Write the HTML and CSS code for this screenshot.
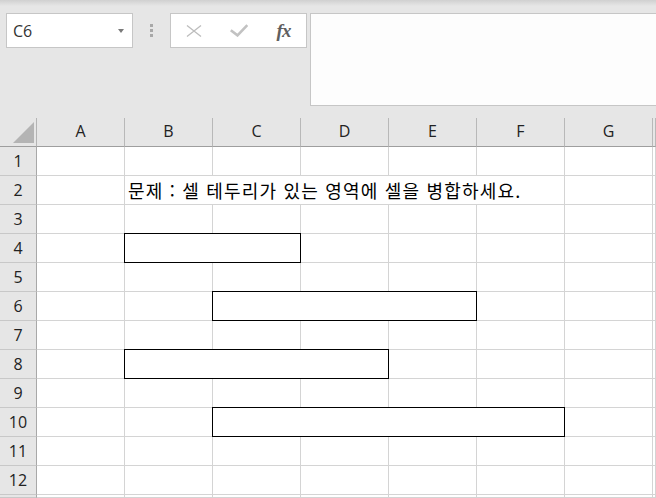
FILE: index.html
```html
<!DOCTYPE html>
<html lang="ko">
<head>
<meta charset="utf-8">
<title>Sheet</title>
<link rel="stylesheet" href="styles.css">
</head>
<body>
<div class="toolbar">
  <div class="namebox"><span class="ref">C6</span><span class="caret"></span></div>
  <div class="grip"><span></span><span></span><span></span></div>
  <div class="fxbox">
    <span class="slot"><svg width="16" height="12" viewBox="0 0 16 12"><path d="M1 0.5L15 11.5M15 0.5L1 11.5" stroke="#bdbdbd" stroke-width="1.3" fill="none"/></svg></span>
    <span class="slot"><svg width="18" height="13" viewBox="0 0 18 13"><path d="M0.8 6.2L7.5 11.4L17.3 1.2" stroke="#c2c2c2" stroke-width="2.6" fill="none"/></svg></span>
    <span class="slot fx">fx</span>
  </div>
  <div class="formula"></div>
</div>
<div class="sheet">
  <div class="corner"><svg width="21" height="21" viewBox="0 0 21 21"><path d="M21 0V21H0Z" fill="#b4b4b4"/></svg></div>
  <div class="ch">A</div><div class="ch">B</div><div class="ch">C</div><div class="ch">D</div><div class="ch">E</div><div class="ch">F</div><div class="ch">G</div><div class="ch"></div>

  <div class="rh">1</div><div class="c"></div><div class="c"></div><div class="c"></div><div class="c"></div><div class="c"></div><div class="c"></div><div class="c"></div><div class="c"></div>

  <div class="rh">2</div><div class="c"></div><div class="c text">문제 : 셀 테두리가 있는 영역에 셀을 병합하세요.</div><div class="c"></div><div class="c"></div>

  <div class="rh">3</div><div class="c"></div><div class="c"></div><div class="c"></div><div class="c"></div><div class="c"></div><div class="c"></div><div class="c"></div><div class="c"></div>

  <div class="rh">4</div><div class="c"></div><div class="box span2"></div><div class="c"></div><div class="c"></div><div class="c"></div><div class="c"></div><div class="c"></div>

  <div class="rh">5</div><div class="c"></div><div class="c"></div><div class="c"></div><div class="c"></div><div class="c"></div><div class="c"></div><div class="c"></div><div class="c"></div>

  <div class="rh">6</div><div class="c"></div><div class="c"></div><div class="box span3"></div><div class="c"></div><div class="c"></div><div class="c"></div>

  <div class="rh">7</div><div class="c"></div><div class="c"></div><div class="c"></div><div class="c"></div><div class="c"></div><div class="c"></div><div class="c"></div><div class="c"></div>

  <div class="rh">8</div><div class="c"></div><div class="box span3"></div><div class="c"></div><div class="c"></div><div class="c"></div><div class="c"></div>

  <div class="rh">9</div><div class="c"></div><div class="c"></div><div class="c"></div><div class="c"></div><div class="c"></div><div class="c"></div><div class="c"></div><div class="c"></div>

  <div class="rh">10</div><div class="c"></div><div class="c"></div><div class="box span4"></div><div class="c"></div><div class="c"></div>

  <div class="rh">11</div><div class="c"></div><div class="c"></div><div class="c"></div><div class="c"></div><div class="c"></div><div class="c"></div><div class="c"></div><div class="c"></div>

  <div class="rh">12</div><div class="c"></div><div class="c"></div><div class="c"></div><div class="c"></div><div class="c"></div><div class="c"></div><div class="c"></div><div class="c"></div>

  <div class="rh"></div><div class="c"></div><div class="c"></div><div class="c"></div><div class="c"></div><div class="c"></div><div class="c"></div><div class="c"></div><div class="c"></div>
</div>
</body>
</html>
```

FILE: styles.css
```css
* { box-sizing: border-box; }
html, body { margin: 0; padding: 0; }
body {
  width: 656px;
  height: 498px;
  overflow: hidden;
  background: #e6e6e6;
  font-family: "Open Sans", "Noto Sans", sans-serif;
}

.toolbar {
  height: 118px;
  display: flex;
  align-items: flex-start;
  padding: 13px 0 0 6px;
  background: linear-gradient(#d0d0d0 0, #e6e6e6 6px);
  overflow: hidden;
}
.namebox {
  flex: 0 0 127px;
  height: 35px;
  border: 1px solid #c6c6c6;
  background: #fff;
  display: flex;
  align-items: center;
  justify-content: space-between;
  padding: 0 8px 0 6px;
  font-size: 16px;
  color: #333;
}
.caret {
  width: 0;
  height: 0;
  border-left: 3.5px solid transparent;
  border-right: 3.5px solid transparent;
  border-top: 4px solid #7a7a7a;
}
.grip {
  flex: 0 0 3px;
  margin: 11px 0 0 17px;
  display: flex;
  flex-direction: column;
  gap: 2px;
}
.grip span {
  width: 3px;
  height: 3px;
  background: #a8a8a8;
}
.fxbox {
  flex: 0 0 137px;
  margin-left: 17px;
  height: 35px;
  border: 1px solid #c6c6c6;
  background: #fff;
  display: flex;
  align-items: center;
}
.slot {
  width: 45px;
  display: flex;
  justify-content: center;
  align-items: center;
}
.fx {
  font-family: "Liberation Serif", "DejaVu Serif", serif;
  font-style: italic;
  font-weight: bold;
  font-size: 19px;
  color: #5f5f5f;
  letter-spacing: -1px;
}
.formula {
  flex: 0 0 346px;
  margin-left: 3px;
  height: 93px;
  border: 1px solid #c6c6c6;
  border-right: none;
  background: #fdfdfd;
}

.sheet {
  display: grid;
  grid-template-columns: 37px repeat(7, 88px) 3px;
  grid-template-rows: repeat(13, 29px) 3px;
  background: #fff;
}
.corner {
  background: #e6e6e6;
  border-right: 1px solid #b4b4b4;
  border-bottom: 1px solid #9e9e9e;
  display: flex;
  justify-content: flex-end;
  align-items: flex-end;
  padding: 0 2px 3px 0;
}
.corner svg { display: block; }
.ch {
  background: #e6e6e6;
  border-right: 1px solid #b8b8b8;
  border-bottom: 1px solid #9e9e9e;
  display: flex;
  align-items: center;
  justify-content: center;
  padding-bottom: 2px;
  font-size: 16px;
  color: #222;
}
.rh {
  background: #e6e6e6;
  border-right: 1px solid #a8a8a8;
  border-bottom: 1px solid #c8c8c8;
  display: flex;
  align-items: center;
  justify-content: center;
  font-size: 16px;
  color: #222;
}
.c {
  border-right: 1px solid #d4d4d4;
  border-bottom: 1px solid #d4d4d4;
}
.text {
  grid-column: span 5;
  display: flex;
  align-items: center;
  padding-left: 3px;
  white-space: nowrap;
  font-family: "Noto Sans CJK KR", "Noto Sans", sans-serif;
  font-size: 18px;
  letter-spacing: 1.2px;
  color: #000;
}
.box {
  border: 1px solid #000;
  margin: -1px 0 0 -1px;
}
.span2 { grid-column: span 2; }
.span3 { grid-column: span 3; }
.span4 { grid-column: span 4; }
```
